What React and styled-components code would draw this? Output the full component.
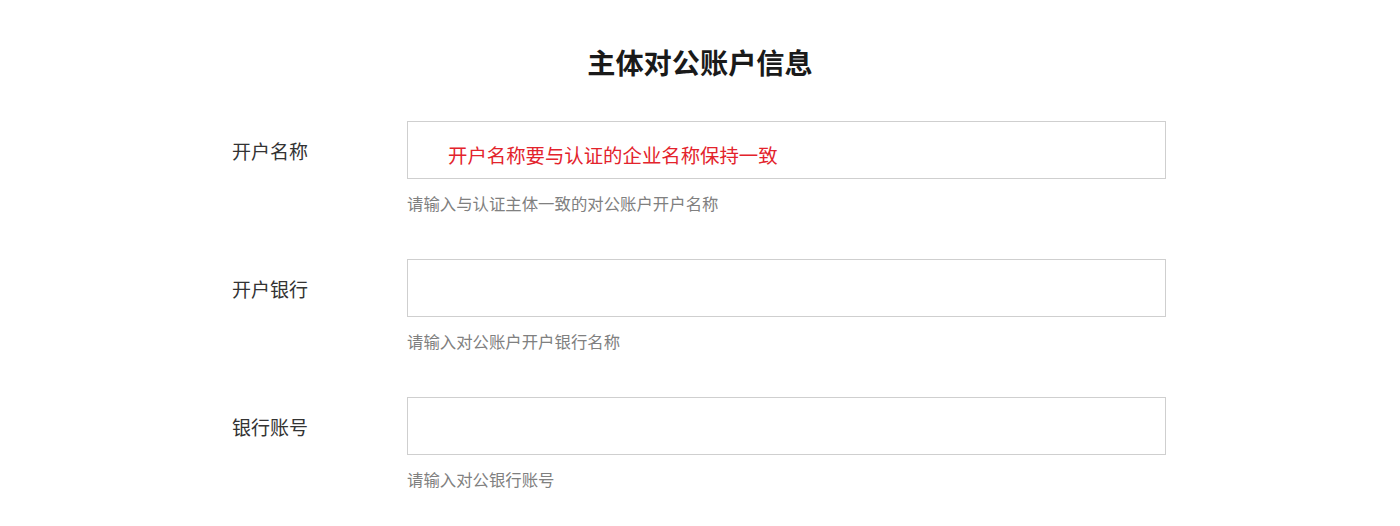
import React from "react";
import styled, { createGlobalStyle } from "styled-components";

const Global = createGlobalStyle`
  html, body { margin: 0; padding: 0; background: #fff; }
  body { font-family: "Microsoft YaHei", "Noto Sans CJK SC", "Noto Sans", sans-serif; }
  * { box-sizing: border-box; }
`;

const Page = styled.div`
  padding-top: 42px;
  display: flex;
  flex-direction: column;
  align-items: center;
`;

const Title = styled.h1`
  margin: 0 0 39px;
  font-size: 28.2px;
  line-height: 40px;
  font-weight: 700;
  color: #1a1a1a;
`;

const Form = styled.div`
  width: 934px;
  display: flex;
  flex-direction: column;
  gap: 44px;
  margin-left: -2px;
`;

const Row = styled.div`
  display: grid;
  grid-template-columns: 175px 1fr;
  grid-template-rows: 58px auto;
  row-gap: 12px;
`;

const Label = styled.div`
  align-self: center;
  font-size: 19px;
  color: #333;
  line-height: 24px;
  padding-top: 2px;
`;

const Field = styled.input`
  width: 759px;
  height: 58px;
  border: 1px solid #cfcfcf;
  outline: none;
  padding: 8px 12px 0 40px;
  font-family: inherit;
  font-size: 19.4px;
  color: #333;
  background: #fff;
  &::placeholder {
    color: ${(p) => (p.$tip ? "#e3232c" : "transparent")};
    opacity: 1;
  }
`;

const Help = styled.div`
  grid-column: 2;
  font-size: 16.4px;
  line-height: 24px;
  color: #808080;
`;

const rows = [
  { label: "开户名称", tip: "开户名称要与认证的企业名称保持一致", help: "请输入与认证主体一致的对公账户开户名称" },
  { label: "开户银行", tip: "", help: "请输入对公账户开户银行名称" },
  { label: "银行账号", tip: "", help: "请输入对公银行账号" },
];

export default function App() {
  return (
    <>
      <Global />
      <Page>
        <Title>主体对公账户信息</Title>
        <Form>
          {rows.map((r) => (
            <Row key={r.label}>
              <Label>{r.label}</Label>
              <Field readOnly $tip={!!r.tip} placeholder={r.tip} />
              <Help>{r.help}</Help>
            </Row>
          ))}
        </Form>
      </Page>
    </>
  );
}
